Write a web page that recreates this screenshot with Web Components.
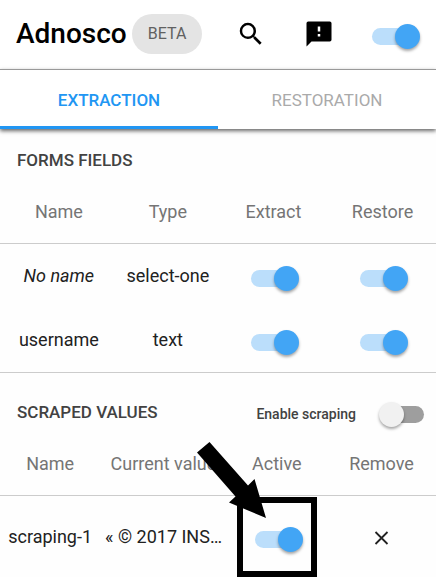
<!DOCTYPE html>
<html lang="en">
<head>
<meta charset="utf-8">
<meta name="viewport" content="width=device-width, initial-scale=1">
<title>Adnosco</title>
<style>
body{margin:0;background:#fefefe;color:#212121;font-family:Roboto,"Liberation Sans",Arial,sans-serif;font-size:18px;line-height:24px}
</style>
</head>
<body>
<adn-app></adn-app>

<script>
(function(){
  // on/off switch, a styled checkbox
  class AdnSwitch extends HTMLElement {
    constructor(){
      super();
      const root = this.attachShadow({mode:'open'});
      root.innerHTML = `
<style>
:host{display:inline-flex;align-items:center;gap:24px;font-size:14px;font-weight:500;color:#424242}
label{order:0}
label:empty{display:none}
input{order:1;appearance:none;position:relative;width:44px;height:17px;margin:0;border-radius:9px;
  background:#9e9e9e;cursor:pointer;flex:none}
input::before{content:"";position:absolute;top:-4px;left:-1px;width:25px;height:25px;border-radius:50%;
  background:#f1f1f1;box-shadow:0 2px 3px rgba(0,0,0,.35)}
input:checked{background:#bbdefb}
input:checked::before{left:23px;background:#42a5f5}
</style>
<label for="box"></label>
<input id="box" type="checkbox" role="switch">
`;
      const box = root.querySelector('input');
      box.checked = this.hasAttribute('on');
      if(this.hasAttribute('text')) root.querySelector('label').textContent = this.getAttribute('text');
      else box.setAttribute('aria-label', this.getAttribute('name') || 'Active');
    }
  }

  class AdnHeader extends HTMLElement {
    constructor(){
      super();
      const root = this.attachShadow({mode:'open'});
      root.innerHTML = `
<style>
:host{display:block;background:#fff}
header{display:flex;align-items:center;height:69px;padding:0 20px 2px 16px;box-sizing:border-box}
h1{margin:0;font-size:28px;line-height:32px;font-weight:500;color:#000}
.badge{margin-left:5px;padding:8px 16px;border-radius:20px;background:#e4e4e4;color:#616161;font-size:16px}
.tools{display:flex;align-items:center;gap:38px;margin-left:auto}
button{display:flex;padding:0;border:0;background:none;color:#000;cursor:pointer}
svg{width:30px;height:30px;fill:currentColor}
adn-switch{padding-top:6px}
</style>
<header>
  <h1>Adnosco</h1>
  <span class="badge">BETA</span>
  <div class="tools">
    <button aria-label="Search"><svg viewBox="0 0 24 24"><path d="M9.5,3A6.5,6.5 0 0,1 16,9.5C16,11.11 15.41,12.59 14.44,13.73L14.71,14H15.5L20.5,19L19,20.5L14,15.5V14.71L13.73,14.44C12.59,15.41 11.11,16 9.5,16A6.5,6.5 0 0,1 3,9.5A6.5,6.5 0 0,1 9.5,3M9.5,5C7,5 5,7 5,9.5C5,12 7,14 9.5,14C12,14 14,12 14,9.5C14,7 12,5 9.5,5Z"/></svg></button>
    <button aria-label="Feedback"><svg viewBox="0 0 24 24"><path d="M13,10H11V6H13V10M13,14H11V12H13V14M20.6,2H3.4A1.4,1.4 0 0,0 2,3.4V22L6,18H20.6A1.4,1.4 0 0,0 22,16.6V3.4A1.4,1.4 0 0,0 20.6,2Z"/></svg></button>
    <adn-switch on name="Extension enabled"></adn-switch>
  </div>
</header>
`;
    }
  }

  class AdnTabs extends HTMLElement {
    constructor(){
      super();
      const root = this.attachShadow({mode:'open'});
      root.innerHTML = `
<style>
:host{display:block;position:relative;background:#fff;border-top:1px solid #999;
  box-shadow:0 2px 4px rgba(0,0,0,.6)}
nav{display:flex}
button{flex:1;height:59px;padding:3px 0 0;border:0;border-bottom:3px solid transparent;background:none;
  font:inherit;font-size:17px;color:#aaa;cursor:pointer}
button[aria-selected=true]{color:#2196f3;border-color:#2196f3;font-weight:500}
</style>
<nav role="tablist">
  <button role="tab" aria-selected="true">EXTRACTION</button>
  <button role="tab" aria-selected="false">RESTORATION</button>
</nav>
`;
      const tabs = root.querySelectorAll('button');
      tabs.forEach(tab=>{
        tab.addEventListener('click',()=>{
          tabs.forEach(t=>t.setAttribute('aria-selected', t===tab));
        });
      });
    }
  }

  // titled block, slot "action" sits at the right of the title
  class AdnSection extends HTMLElement {
    constructor(){
      super();
      const root = this.attachShadow({mode:'open'});
      root.innerHTML = `
<style>
:host{display:block}
.head{display:flex;align-items:center;justify-content:space-between;padding:var(--head-top,19px) 12px 8px 17px}
h2{margin:0;font-size:17px;line-height:24px;font-weight:500;color:#424242}
::slotted([slot=action]){padding-top:4px;height:20px}
</style>
<div class="head"><h2></h2><slot name="action"></slot></div>
<slot></slot>
`;
      root.querySelector('h2').textContent = this.getAttribute('heading');
    }
  }

  const tableCss = `
:host{display:block}
table{width:100%;table-layout:fixed;border-collapse:separate;border-spacing:0}
th,td{padding:0;text-align:center;vertical-align:middle}
th{height:63px;border-bottom:1px solid #ccc;font-weight:400;color:#757575;white-space:nowrap}
td{height:64px}
adn-switch{vertical-align:middle;padding-top:3px}
`;

  class AdnFields extends HTMLElement {
    constructor(){
      super();
      const root = this.attachShadow({mode:'open'});
      root.innerHTML = `
<style>
${tableCss}
:host{border-bottom:1px solid #ccc}
th:nth-child(n+3),td:nth-child(n+3){padding-left:2px}
</style>
<table>
  <colgroup><col style="width:27%"><col style="width:23%"><col style="width:25%"><col style="width:25%"></colgroup>
  <thead><tr><th>Name</th><th>Type</th><th>Extract</th><th>Restore</th></tr></thead>
  <tbody>
    <tr><td><em>No name</em></td><td>select-one</td>
      <td><adn-switch on name="Extract"></adn-switch></td><td><adn-switch on name="Restore"></adn-switch></td></tr>
    <tr><td>username</td><td>text</td>
      <td><adn-switch on name="Extract"></adn-switch></td><td><adn-switch on name="Restore"></adn-switch></td></tr>
  </tbody>
</table>
`;
    }
  }

  class AdnScraped extends HTMLElement {
    constructor(){
      super();
      const root = this.attachShadow({mode:'open'});
      root.innerHTML = `
<style>
${tableCss}
td{height:81px;white-space:nowrap}
td.active{position:relative}
button{padding:0;border:0;background:none;color:#212121;vertical-align:middle;cursor:pointer}
button svg{display:block;width:22px;height:22px}
</style>
<table>
  <colgroup><col style="width:23%"><col style="width:29%"><col style="width:23%"><col style="width:25%"></colgroup>
  <thead><tr><th>Name</th><th>Current value</th><th>Active</th><th>Remove</th></tr></thead>
  <tbody>
    <tr><td>scraping-1</td><td>« © 2017 INS…</td>
      <td class="active"><adn-switch on name="Active"></adn-switch><adn-pointer></adn-pointer></td>
      <td><button aria-label="Remove"><svg viewBox="0 0 22 22"><path d="M5.5 5L17.5 17M17.5 5L5.5 17" fill="none" stroke="currentColor" stroke-width="1.8"/></svg></button></td></tr>
  </tbody>
</table>
`;
    }
  }

  // frame and arrow laid over the cell that holds it
  class AdnPointer extends HTMLElement {
    constructor(){
      super();
      const root = this.attachShadow({mode:'open'});
      root.innerHTML = `
<style>
:host{position:absolute;bottom:0;right:calc(50% - 40px);pointer-events:none}
svg{display:block;width:120px;height:135px}
</style>
<svg viewBox="0 0 120 135" aria-hidden="true">
  <rect x="43" y="58" width="74" height="74" fill="none" stroke="#000" stroke-width="6"/>
  <path d="M12.5 0L51 43.5L57.5 37L69 76L32 60.5L38.5 54.5L0 10.5Z"/>
</svg>
`;
    }
  }

  class AdnApp extends HTMLElement {
    constructor(){
      super();
      const root = this.attachShadow({mode:'open'});
      root.innerHTML = `
<style>
:host{display:block}
.scraped{--head-top:27px}
</style>
<adn-header></adn-header>
<adn-tabs></adn-tabs>
<main>
  <adn-section heading="FORMS FIELDS"><adn-fields></adn-fields></adn-section>
  <adn-section class="scraped" heading="SCRAPED VALUES">
    <adn-switch slot="action" text="Enable scraping"></adn-switch>
    <adn-scraped></adn-scraped>
  </adn-section>
</main>
`;
    }
  }

  customElements.define('adn-switch',AdnSwitch);
  customElements.define('adn-header',AdnHeader);
  customElements.define('adn-tabs',AdnTabs);
  customElements.define('adn-section',AdnSection);
  customElements.define('adn-fields',AdnFields);
  customElements.define('adn-pointer',AdnPointer);
  customElements.define('adn-scraped',AdnScraped);
  customElements.define('adn-app',AdnApp);
})();
</script>
</body>
</html>
